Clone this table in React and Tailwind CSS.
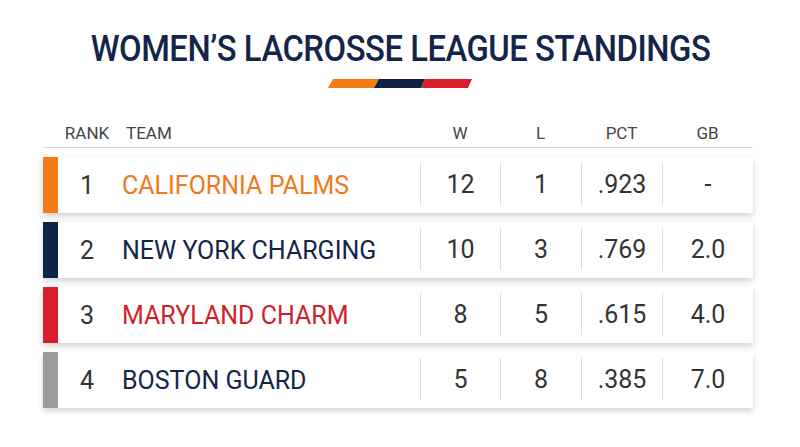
import React from "react";

const rows = [
  { rank: 1, team: "CALIFORNIA PALMS", w: "12", l: "1", pct: ".923", gb: "-", bar: "bg-[#f47b16]", text: "text-[#f07a1a]" },
  { rank: 2, team: "NEW YORK CHARGING", w: "10", l: "3", pct: ".769", gb: "2.0", bar: "bg-[#0f2347]", text: "text-[#13264a]" },
  { rank: 3, team: "MARYLAND CHARM", w: "8", l: "5", pct: ".615", gb: "4.0", bar: "bg-[#d81e2c]", text: "text-[#cf1f2e]" },
  { rank: 4, team: "BOSTON GUARD", w: "5", l: "8", pct: ".385", gb: "7.0", bar: "bg-[#9c9c9c]", text: "text-[#13264a]" },
];

const cols = "grid grid-cols-[15px_58px_304px_80px_81px_81px_91px]";

function Stripe() {
  return (
    <svg width="144" height="9" viewBox="0 0 144 9" className="block">
      <polygon points="5,0 51,0 46,9 0,9" fill="#f47b16" />
      <polygon points="51,0 97,0 93,9 46,9" fill="#0f2347" />
      <polygon points="97,0 144,0 140,9 93,9" fill="#d81e2c" />
    </svg>
  );
}

export default function App() {
  return (
    <div className="w-[800px] h-[447px] bg-white font-['Roboto',sans-serif] flex flex-col items-center pt-[31px]">
      <h1 className="text-[36px] leading-[36px] font-medium text-[#13264a] tracking-[-0.5px] whitespace-nowrap scale-x-[0.91]">
        WOMEN’S LACROSSE LEAGUE STANDINGS
      </h1>
      <div className="mt-[12px]">
        <Stripe />
      </div>
      <div className="w-[710px] mt-[32px] self-start ml-[43px]">
        <div className={`${cols} items-center h-[28px] border-b border-[#d8d8d8] text-[17px] text-[#444] leading-none`}>
          <div />
          <div className="text-center">RANK</div>
          <div className="pl-[10px]">TEAM</div>
          <div className="text-center">W</div>
          <div className="text-center">L</div>
          <div className="text-center">PCT</div>
          <div className="text-center">GB</div>
        </div>
        <div className="flex flex-col gap-[9px] mt-[9px]">
          {rows.map((r) => (
            <div key={r.rank} className={`${cols} h-[56px] bg-white shadow-[0_3px_6px_rgba(0,0,0,0.18)] text-[25px] leading-none`}>
              <div className={r.bar} />
              <div className="flex items-center justify-center text-[#333]">{r.rank}</div>
              <div className={`flex items-center pl-[6px] ${r.text}`}>{r.team}</div>
              {[r.w, r.l, r.pct, r.gb].map((v, i) => (
                <div key={i} className="flex items-center justify-center mt-[6px] mb-[8px] border-l border-[#dcdcdc] text-[#333]">
                  {v}
                </div>
              ))}
            </div>
          ))}
        </div>
      </div>
    </div>
  );
}
